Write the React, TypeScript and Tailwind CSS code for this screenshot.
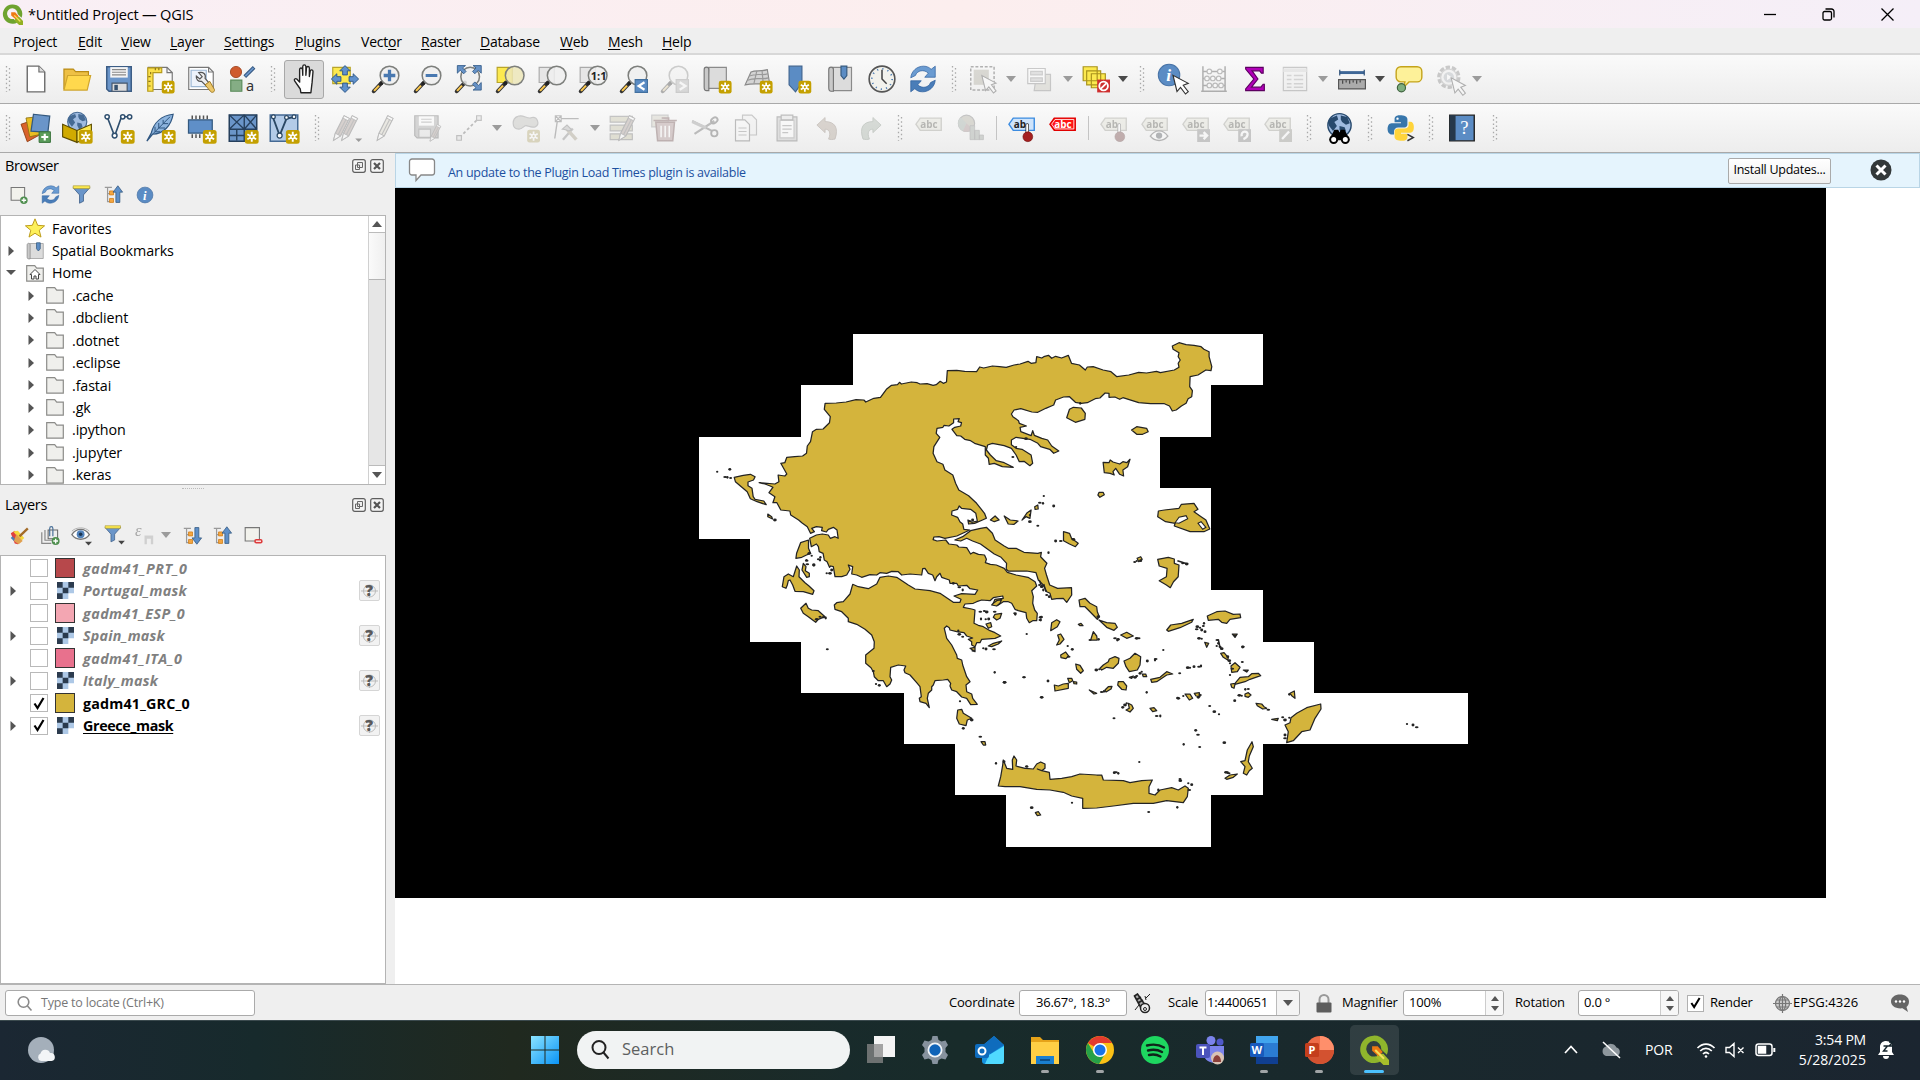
import React from "react";

type Kids = { children?: React.ReactNode };
const S = ({ children, s = 28, dim = false }: Kids & { s?: number; dim?: boolean }) => (
  <svg width={s} height={s} viewBox="0 0 24 24" fill="none" className={dim ? "shrink-0 overflow-visible opacity-35 grayscale-[60%]" : "shrink-0 overflow-visible"}>
    {children}
  </svg>
);
const C = ({ children, w = "w-[41.3px]" }: Kids & { w?: string }) => (
  <div className={"flex h-full shrink-0 items-center justify-center " + w}>{children}</div>
);
const Grip = ({ w = "w-5" }: { w?: string }) => (
  <C w={w}>
    <svg width="6" height="26" viewBox="0 0 6 26">
      <path d="M1.5 0v26M4.5 2v24" stroke="#a9a9a9" strokeWidth="1.3" strokeDasharray="1.5 2.7" />
    </svg>
  </C>
);
const Arr = ({ w = "w-[16px]", on = false }: { w?: string; on?: boolean }) => (
  <C w={w}>
    <svg width="10" height="6" viewBox="0 0 10 6"><path d="M0 0h10L5 6z" fill={on ? "#4a4a4a" : "#9b9b9b"} /></svg>
  </C>
);
const Sep = () => <C w="w-[10px]"><div className="h-6 w-px bg-[#c4c4c4]" /></C>;

const Star = ({ x = 13.5, y = 13.5 }: { x?: number; y?: number }) => (
  <g transform={`translate(${x} ${y})`}>
    <rect width="11" height="11" rx="2" fill="#c4a000" />
    <path d="M5.500 1.500v8M2 3.500l7 4M9 3.500l-7 4" stroke="#fff" strokeWidth="1.500" />
    <circle cx="5.500" cy="5.500" r="2" fill="#fff" />
    <circle cx="5.500" cy="5.500" r=".9" fill="#c4a000" />
  </g>
);
const Handle = () => (
  <>
    <path d="M1.500 22.500l7-7.500" stroke="#333" strokeWidth="3.400" strokeLinecap="round" />
    <path d="M1.800 22.200L6 17.700" stroke="#fcc94f" strokeWidth="1.800" />
    <circle cx="8" cy="15.700" r="1.600" fill="#222" />
  </>
);
const Lens = ({ x = 15, y = 9, fill = "#eee" }: { x?: number; y?: number; fill?: string }) => (
  <>
    <Handle />
    <circle cx={x} cy={y} r="8" fill={fill} fillOpacity=".85" stroke="#7d7f7c" strokeWidth="1.300" />
  </>
);
const Refresh = () => (
  <g stroke="#2d5f9e" strokeWidth=".6">
    <path d="M1.500 11C2 5 7 1 12.500 1c3 0 5 1.200 6.500 2.700L22.500 1v9.500h-9L16.500 7C13 3.500 7 4.500 5.500 9z" fill="#6a9bd1" />
    <path d="M22.500 13c-.5 6-5.500 10-11 10-3 0-5-1.200-6.500-2.700L1.500 23v-9.500h9L7.500 17c3.500 3.500 9.500 2.500 11-2z" fill="#4a7db8" />
  </g>
);
const Label = ({ fill = "#dedebd", stroke = "#93937a", color = "#45452f", t = "abc" }: { fill?: string; stroke?: string; color?: string; t?: string }) => (
  <>
    <path d="M4.500 3.500H22.500v10.500H4.500L.8 8.700z" fill={fill} stroke={stroke} strokeWidth="1.200" />
    <text x={t === "ab" ? 5 : 4.500} y="11.800" fontSize="8.500" fontWeight="700" fontFamily="Open Sans" fill={color}>{t}</text>
  </>
);
const Pin = () => (
  <>
    <path d="M16.500 9.500v8" stroke="#222" strokeWidth="3" strokeLinecap="round" />
    <path d="M16.500 9.500v7" stroke="#fff" strokeWidth="1.800" strokeLinecap="round" />
    <circle cx="17" cy="19.500" r="4.200" fill="#a52020" stroke="#701010" strokeWidth=".5" />
  </>
);
const Pencil = ({ x = 0, fill = "#dcd2a8" }: { x?: number; fill?: string }) => (
  <g transform={`translate(${x} 0)`}>
    <path d="M4.500 22.500l1.500-6L13.500 1.500l4.500 2.300-7.500 15z" fill={fill} stroke="#555" />
    <path d="M6 16.500l4.500 2.300-6 3.700zM13.500 1.500l4.500 2.300-1 2-4.500-2.300z" fill="#fff" stroke="#555" strokeWidth=".8" />
    <path d="M15 5L8.500 17.500" stroke="#666" />
  </g>
);
const Cursor = ({ x = 11, y = 9 }: { x?: number; y?: number }) => (
  <path transform={`translate(${x} ${y})`} d="M0 0l3.200 13 2.800-3.300 4 5.300 2.200-1.800-4-5.200 4-1.500z" fill="#fff" stroke="#333" strokeWidth=".9" />
);
const Globe = ({ c = "#456a94" }: { c?: string }) => (
  <>
    <circle cx="12" cy="9.500" r="9" fill="#9fbbe0" stroke={c} strokeWidth="1.100" />
    <path d="M5 4l5-2 1 3-3 2 2 3-3 4-3-4-1-3zM13 2l5 1 2 5-3 1-3-2-1-2zM12 10l4 1 1 3-3 3-2-4z" fill={c} />
  </>
);
const Paper = () => <path d="M4.500 1h10l5 5v17h-15z" fill="#fff" stroke="#6b6b6b" strokeWidth="1.200" />;
const QGIS = ({ s = 22 }: { s?: number }) => (
  <svg width={s} height={s} viewBox="0 0 24 24" className="shrink-0">
    <path fillRule="evenodd" d="M11.500.5a11 11 0 1 0 6 20.500L13.500 17a6 6.200 0 1 1 4.300-5.500l4.500 4.300A11 11 0 0 0 11.500.5z" fill="#6fa32f" />
    <path d="M16 14.500h3.500l4.500 5v4.500h-4.500L14.500 19z" fill="#93b023" />
    <path d="M10.500 9.500h4.500l4 4.500-3.500 3.500-5-4.500z" fill="#ee7913" />
    <path d="M14 13l7 7" stroke="#f3e05a" strokeWidth="1.500" />
  </svg>
);
const Filter = () => (
  <>
    <path d="M1.500 3.500l8 9V23l5-2.500v-8l8-9z" fill="#6a95c9" stroke="#3b5d86" />
    <path d="M1.500 1h21v3.500h-21z" fill="#fce94f" stroke="#a49435" strokeWidth=".8" />
  </>
);
const TreeIcon = ({ down = false }: { down?: boolean }) => (
  <>
    <path d="M1 3h9M4.500 3v18h4M4.500 11h4" stroke="#999" strokeWidth="1.500" />
    <path d="M7 7.500h5v5H7zM7 17h5v5H7z" fill="#f5a742" stroke="#d17e17" />
    <path transform={down ? "translate(0 24) scale(1 -1)" : ""} d="M17.500 1l6 8h-3.500v13h-5V9h-3.500z" fill="#5d8fc9" stroke="#34597f" />
  </>
);
const Info = () => (
  <>
    <circle cx="12" cy="12" r="10.500" fill="#5b8cc4" stroke="#4873a6" />
    <text x="9.200" y="18" fontSize="17" fontStyle="italic" fontWeight="700" fontFamily="Liberation Serif" fill="#fff">i</text>
  </>
);
const Dockbtns = () => (
  <div className="flex gap-1">
    <svg width="14" height="14" viewBox="0 0 14 14"><rect x=".7" y=".7" width="12.600" height="12.600" rx="2" fill="#f4f4f4" stroke="#5e5e5e" strokeWidth="1.200" /><path d="M5.500 3.500h5v5h-5zM3.500 6h4v4.500h-4z" fill="#eee" stroke="#666" /></svg>
    <svg width="14" height="14" viewBox="0 0 14 14"><rect x=".7" y=".7" width="12.600" height="12.600" rx="2" fill="#f4f4f4" stroke="#5e5e5e" strokeWidth="1.200" /><path d="M4 4l6 6M10 4l-6 6" stroke="#555" strokeWidth="2.200" /></svg>
  </div>
);

const menus: [string, number, string][] = [
  ["Project", 3, "w-[65px]"], ["Edit", 0, "w-[43px]"], ["View", 0, "w-[49px]"], ["Layer", 0, "w-[54px]"], ["Settings", 0, "w-[71px]"],
  ["Plugins", 0, "w-[66px]"], ["Vector", 4, "w-[60px]"], ["Raster", 0, "w-[59px]"], ["Database", 0, "w-[80px]"], ["Web", 0, "w-[48px]"],
  ["Mesh", 0, "w-[54px]"], ["Help", 0, "w-[60px]"],
];

function ToolbarOne() {
  return (
    <div className="flex h-[49px] border-b border-[#a9a9a9] bg-gradient-to-b from-[#fafafa] to-[#ededed]">
      <Grip w="w-[15.4px]" />
      <C><S><Paper /><path d="M14.500 1v5h5" stroke="#6b6b6b" fill="#ddd" /></S></C>
      <C><S><path d="M.8 21V3.500h8l2 2.200h11v4" fill="#eec045" stroke="#b98b16" /><path d="M.8 21.500L4 9h19.700l-3 12.500z" fill="#ffd84d" stroke="#cfa52c" /></S></C>
      <C><S><path d="M1.500 1.500h21v21h-19l-2-2z" fill="#6a95c9" stroke="#3c5d85" strokeWidth="1.300" /><path d="M4.500 1.800h15v9h-15z" fill="#f4f4f4" /><path d="M6 4h12M6 6.200h12M6 8.400h12" stroke="#888" /><path d="M6 15.500h13v7H6z" fill="#ddd" stroke="#44566b" /><path d="M8 17h3v4.500H8z" fill="#34506e" /></S></C>
      <C><S><path d="M2 2h16l4.500 4.500V21H2z" fill="#f8f8f8" stroke="#777" /><path d="M18 2v4.500h4.500" stroke="#777" /><path d="M1.500 2.500h12v4H6v16H1.500z" fill="#fbe04b" stroke="#b59a1b" /><path d="M4 6v2M8 2.500v2M11 2.500v2M2 10h2M2 14h2M2 18h2" stroke="#8a741a" /><Star /></S></C>
      <C><S><path d="M1.500 2h17l4 4v15h-21z" fill="#fff" stroke="#777" /><path d="M18.500 2v4h4" stroke="#777" /><path d="M3.500 4.500h13v14h-13z" fill="#edf3fb" stroke="#9db8d4" /><path d="M10 6.500c4-1 6.500 1.500 5.500 5l3.500 4-2.500 2.500-4-4c-3 .5-5-2-4.500-4.500l3 2.500 2-2z" fill="#eee" stroke="#555" /><path d="M15.500 17l4-3 4 7c.5 2-2 3.500-3.500 1.500z" fill="#ecc76a" stroke="#9b741b" strokeWidth=".8" /></S></C>
      <C><S><circle cx="6" cy="6" r="4.800" fill="#cf5b2e" stroke="#9c3d17" strokeWidth=".7" /><path d="M13.500 10l8-8" stroke="#33567f" strokeWidth="3.200" /><path d="M14 9.500l7-7" stroke="#6a95c9" strokeWidth="1.500" /><path d="M1.500 13h9.500v9.500H1.500z" fill="#85ad85" stroke="#5a8b5a" /><text x="14.500" y="22" fontSize="12.500" fontFamily="Noto Sans" fill="#333">a</text></S></C>
      <Grip w="w-[20px]" />
      <C>
        <div className="flex h-[39px] w-[40px] items-center justify-center rounded-[3px] border border-[#a8a8a8] bg-[#dadada]">
          <S s={30}><path d="M8 23L7.500 20 3 13.500c-.8-1.200.6-2.300 1.700-1.500L7 14.500V4.500c0-1.700 2.100-1.700 2.300 0L9.500 9V2c.2-1.700 2.300-1.700 2.500 0v7l.5-6c.3-1.500 2.300-1.300 2.300.3V10l.7-4.500c.4-1.300 2.200-1 2.200.5L17 14.500 16 23z" transform="translate(1.500 0)" fill="#fff" stroke="#222" strokeWidth="1.100" strokeLinejoin="round" /></S>
        </div>
      </C>
      <C><S><path d="M1.500 2h15v14h-15z" fill="#fce94f" stroke="#b8a42a" /><g fill="#5f91cd" stroke="#2c5685" strokeWidth=".8"><path d="M12 .5l4.500 4.500H14v3.500h-4V5H7.500zM12 23.500l4.500-4.500H14v-3.500h-4V19H7.500zM.3 12L5 7.500V10h3.500v4H5v2.500zM23.700 12L19 7.500V10h-3.500v4H19v2.500z" /></g></S></C>
      <C><S><Lens /><path d="M15 4v10M10 9h10" stroke="#4878b0" strokeWidth="2.800" /></S></C>
      <C><S><Lens /><path d="M10 9h10" stroke="#4878b0" strokeWidth="2.600" /></S></C>
      <C><S><Lens x={13} y={10} /><path d="M2 .5h7l-2.500 2 3 3-2 2-3-3L2 7zM22.500.5h-7l2.500 2-3 3 2 2 3-3 2.500 2.500zM22.500 21.500h-7l2.500-2-3-3 2-2 3 3 2.500-2.500z" fill="#6792c6" stroke="#2c5685" strokeWidth=".7" /></S></C>
      <C><S><path d="M1 2h13v13H1z" fill="#fce94f" stroke="#b8a42a" /><Lens x={16} fill="#ece6b8" /></S></C>
      <C><S><path d="M1 2h13v13H1z" fill="#e6e6e6" stroke="#aaa" /><Lens x={16} /></S></C>
      <C><S><path d="M1 2h13v13H1z" fill="#e6e6e6" stroke="#aaa" /><Lens x={16} /><text x="10" y="12.500" fontSize="9.500" fontWeight="700" fontFamily="Open Sans" fill="#222">1:1</text></S></C>
      <C><S><Lens /><path d="M13 12.500h10.500v11H13z" fill="#5b8cc4" stroke="#42709f" /><path d="M21 14.800l-5 3.200 5 3.200" stroke="#fff" strokeWidth="1.900" /></S></C>
      <C><S dim><Lens /><path d="M13 12.500h10.500v11H13z" fill="#aaa" stroke="#888" /><path d="M16 14.800l5 3.200-5 3.200" stroke="#fff" strokeWidth="1.900" /></S></C>
      <C><S><path d="M5 2h15v18H4z" fill="#dcdcdc" stroke="#8a8a8a" /><path d="M1 4c0-3 4-3 4 0v18H3C1 22 1 20 1 19z" fill="#c9c9c9" stroke="#777" /><Star /></S></C>
      <C><S><path d="M6 6c4-2 8 0 14-2l2 12c-7 1-13-1-21 1z" fill="#d4d4d4" stroke="#8a8a8a" /><path d="M11 5L8.500 16M15.500 5l1 11M4.500 9.500c7-3 11 0 16-2M3 13c7-3 12 0 18-2" stroke="#999" /><Star /></S></C>
      <C><S><path d="M3.500 1h11v14l-5.500 8-5.500-6z" fill="#5b8cc4" stroke="#41658f" /><Star x={11.500} /></S></C>
      <C><S><path d="M5 2h16v20H4z" fill="#dcdcdc" stroke="#8a8a8a" /><path d="M1.500 4c0-3 4-3 4 0v18.500H3.500c-2 0-2-2-2-3z" fill="#c9c9c9" stroke="#777" /><path d="M12 1h5v8l-2.500 3L12 9z" fill="#5b8cc4" stroke="#34597f" /></S></C>
      <C><S><circle cx="12" cy="12" r="11" fill="#f2f2ec" stroke="#555" strokeWidth="1.400" /><circle cx="12" cy="12" r="8.700" stroke="#4d7db4" strokeWidth="1.500" strokeDasharray="1 3.555" /><path d="M12 4v8l4 4" stroke="#444" strokeWidth="1.300" /></S></C>
      <C><S><Refresh /></S></C>
      <Grip w="w-[21px]" />
      <C w="w-[37px]"><S dim><path d="M1.500 1.500h20v20h-20z" stroke="#333" strokeDasharray="2.500 1.500" strokeWidth="1.300" /><path d="M4 4h13v13H4z" fill="#a8a27c" /><Cursor /></S></C>
      <Arr w="w-[18px]" />
      <C w="w-[40px]"><S dim><path d="M9 8h12v14H7z" fill="#c8c3a4" stroke="#777" /><path d="M1.500 3h15v13h-15z" fill="#fff" stroke="#777" /><path d="M4 5.500h10v3H4zM4 11h10v3H4z" fill="#bbb" stroke="#888" /></S></C>
      <Arr w="w-[17px]" />
      <C w="w-[38px]"><S><path d="M1 1.500h12v12H1zM4 5h12v12H4zM8 7.500h12v12H8z" fill="#fce94f" stroke="#a8921d" /><path d="M13 12.500h11v11H13z" fill="#cf2f2f" /><circle cx="18.500" cy="18" r="3.700" stroke="#fff" strokeWidth="1.600" /><path d="M16 20.500l5-5" stroke="#fff" strokeWidth="1.600" /></S></C>
      <Arr w="w-[17px]" on />
      <Grip w="w-[21px]" />
      <C w="w-[40px]"><S s={30}><g transform="translate(-1 -1) scale(.82)"><Info /></g><Cursor x={12} y={9} /></S></C>
      <C><S dim><path d="M2.500 1v22M21.500 1v22M1 22.500h22M2 5.500h20M2 11.500h20M2 17.500h20" stroke="#333" strokeWidth="1.300" /><g fill="#fff" stroke="#555"><circle cx="8" cy="5.500" r="2" /><circle cx="17" cy="5.500" r="2" /><circle cx="6" cy="11.500" r="2" /><circle cx="11" cy="11.500" r="2" /><circle cx="16" cy="11.500" r="2" /><circle cx="8" cy="17.500" r="2" /><circle cx="13" cy="17.500" r="2" /><circle cx="18" cy="17.500" r="2" /></g></S></C>
      <C><S><path d="M4 2h15v5h-1.500L16 5h-6.500l5 7-5.500 7h8l2-2.500h1V22H4v-1.500l7-8.500-7-8.500z" fill="#b100b8" stroke="#5c0060" strokeWidth="1" /></S></C>
      <C w="w-[38.500px]"><S dim><path d="M2 2h20v20H2z" fill="#eee" stroke="#777" /><path d="M2 3h20v3H2z" fill="#ccc" /><path d="M5 9h4M11 9h8M5 12.500h4M11 12.500h8M5 16h4M11 16h8M5 19h4M11 19h8" stroke="#999" strokeWidth="1.300" /></S></C>
      <Arr w="w-[18px]" />
      <C w="w-[40px]"><S><path d="M1.500 6.500h21" stroke="#3f6796" strokeWidth="2.500" /><path d="M1.500 4v5M22.500 4v5" stroke="#2d4f78" /><path d="M.5 12.500h23v8H.5z" fill="#ababab" stroke="#565656" /><path d="M4 13v3M7 13v2M10 13v3M13 13v2M16 13v3M19 13v2" stroke="#444" /></S></C>
      <Arr on />
      <C><S><path d="M5 1.500h14a4 4 0 0 1 4 4v5a4 4 0 0 1-4 4h-7L7.500 19l1-4.500H5a4 4 0 0 1-4-4v-5a4 4 0 0 1 4-4z" fill="#fdf199" stroke="#c4a31a" strokeWidth="1.200" /><circle cx="5.500" cy="19.500" r="3.500" fill="#7fae7f" stroke="#3e623e" /></S></C>
      <C w="w-[41px]"><S dim><circle cx="11" cy="10.500" r="8.500" fill="#eee" stroke="#777" strokeWidth="3" strokeDasharray="3.700 1.600" /><circle cx="11" cy="10.500" r="7" fill="#eee" stroke="#999" /><circle cx="11" cy="10.500" r="4.500" fill="#9aaabb" /><path d="M9.500 8l4 2.500-4 2.500z" fill="#fff" /><Cursor x={13} y={11} /></S></C>
      <Arr w="w-[14px]" />
    </div>
  );
}

function ToolbarTwo() {
  return (
    <div className="flex h-[49px] border-b border-[#a9a9a9] bg-gradient-to-b from-[#fafafa] to-[#ededed]">
      <Grip w="w-[15.4px]" />
      <C><S s={30}><path d="M0 9l9-3 5 12-9 5z" fill="#d9622b" stroke="#8e3b14" strokeWidth=".7" /><path d="M4 4l10-1 2 14-9 2z" fill="#e9bd22" stroke="#8e7314" strokeWidth=".7" /><path d="M10 1l13 1.500-1.500 13L8 14.500z" fill="#6a95c9" stroke="#34597f" /><path d="M14.500 15h9v8.500h-9z" fill="#5a9c5a" stroke="#37713a" strokeWidth=".8" /><path d="M19 16.500v5.500M16.200 19.200h5.600" stroke="#fff" strokeWidth="1.700" /></S></C>
      <C><S s={30}><g transform="translate(2 -1) scale(.85)"><Globe /></g><path d="M.5 9l11.500 5v9.500L.5 19z" fill="#d0aa00" stroke="#5c4c00" strokeWidth=".9" /><path d="M12 14l11.500-5v9.500L12 23.500z" fill="#fce94f" stroke="#5c4c00" strokeWidth=".9" /><Star /></S></C>
      <C><S s={30}><path d="M2.500 3l6 15.500L14 3h6.500" stroke="#2f4f6f" strokeWidth="1.300" /><g fill="#fff" stroke="#2f4f6f" strokeWidth="1.200"><circle cx="2.500" cy="3" r="1.700" /><circle cx="15" cy="3" r="1.700" /><circle cx="20.500" cy="3" r="1.700" /><circle cx="8.500" cy="18" r="1.900" /></g><Star /></S></C>
      <C><S s={30}><path d="M22.500 1C13 2 7 8 5 16l-3.500 6.500L6 17c9-.5 15-7 16.500-16z" fill="#8db4de" stroke="#2f5680" /><path d="M20 3L6 17M11 8v4h5M8 11v4h4M14.500 5.500v3h4" stroke="#2f5680" strokeWidth=".8" /><Star /></S></C>
      <C><S s={30}><path d="M2 5.500h19V16H2z" fill="#5f8fc8" stroke="#34597f" /><path d="M5 2v3M8 2v3M11 2v3M14 2v3M17 2v3M5 17v3M8 17v3M11 17v3" stroke="#555" strokeWidth="1.200" /><Star /></S></C>
      <C><S s={30}><path d="M1 1.500h22v21H1z" fill="#6a95c9" stroke="#253f5c" strokeWidth="1.200" /><path d="M1 13h22M13 1.500v21M1 1.500L13 13M13 1.500L1 13M13 13L23 1.500M13 1.500L23 13M1 18h12M7 13v9" stroke="#253f5c" strokeWidth="1.100" /><Star /></S></C>
      <C><S s={30}><path d="M1 1.500h22v21H1z" fill="#b3cbe8" stroke="#456a94" strokeWidth="1.200" /><path d="M3 3l5.500 15L14 4.500 21 3" stroke="#2b4865" strokeWidth="1.500" /><g fill="#fff" stroke="#2b4865"><circle cx="3.500" cy="3" r="1.500" /><circle cx="14" cy="3.500" r="1.500" /><circle cx="20" cy="3" r="1.500" /><circle cx="8.500" cy="18" r="2" /></g><Star /></S></C>
      <Grip w="w-[25px]" />
      <C w="w-[36px]"><S dim><Pencil x={-4} fill="#b58a7a" /><Pencil x={3} fill="#b58a7a" /><path d="M19 21h6l-3 3z" fill="#000" /></S></C>
      <C><S dim><Pencil /></S></C>
      <C><S dim><path d="M1.500 1.500h20v19h-18l-2-2z" fill="#999" stroke="#555" /><path d="M5 2h13v8H5z" fill="#fff" /><path d="M7 4.500h9M7 7h9" stroke="#888" /><path d="M5 13h10v7H5z" fill="#ddd" stroke="#666" /><g transform="translate(11.500 8) scale(.68)"><Pencil fill="#b58a7a" /></g></S></C>
      <C><S dim><path d="M4 20L20 4" stroke="#555" strokeWidth="1.500" strokeDasharray="2.500 2" /><path d="M1.500 18.500h4v4h-4zM18.500 1.500h4v4h-4z" fill="#ddd" stroke="#666" /></S></C>
      <Arr />
      <C><S dim><path d="M5 2c5-2 8 3 12 1 5-1 7 6 3 8-4 1-6-1-8-1-2 0-3 3-6 3C3 13 1 11 1 8s1-5 4-6z" fill="#b5b5a5" stroke="#777" /><Star x={13} y={13.500} /></S></C>
      <C><S dim><path d="M4 4L1.500 21M4 4h18" stroke="#555" strokeWidth="1.200" /><path d="M2 1.500h5v5H2zM2 1.500l5 5M7 1.500l-5 5" fill="#fff" stroke="#555" /><path d="M8.500 22L17 12.500" stroke="#777" strokeWidth="2" /><path d="M11.500 12.500L20 22" stroke="#a58f55" strokeWidth="3" /><path d="M8 13l4-3.500 4 4-2.500 1-2.500-1z" fill="#aaa" stroke="#666" /></S></C>
      <Arr w="w-[15px]" />
      <C w="w-[40.500px]"><S dim><path d="M1 2h19v5H1zM1 9.500h19v5H1zM1 17h19v5H1z" fill="#c8bd6d" stroke="#666" /><g transform="translate(4 0)"><Pencil fill="#b58a7a" /></g></S></C>
      <C w="w-[41px]"><S dim><path d="M1.500 1h14v10h-14z" fill="#d0c9a0" stroke="#888" /><path d="M5 7h16l-1.500 16h-13zM3 5.500h20M10 3.500h6v2" fill="#c47a7a" stroke="#8b3030" strokeWidth="1.300" /><path d="M9.500 10v10M13 10v10M16.500 10v10" stroke="#fff" strokeWidth="1.300" /></S></C>
      <C w="w-[41px]"><S dim><path d="M1 6l17 8.500M3 17L20 6" stroke="#555" strokeWidth="1.800" /><path d="M1 6.500L13 12" stroke="#888" strokeWidth="2.600" /><circle cx="20" cy="16.500" r="2.700" stroke="#444" strokeWidth="1.600" /><ellipse cx="20" cy="5.500" rx="3" ry="2.200" transform="rotate(-35 20 5.500)" stroke="#444" strokeWidth="1.600" /></S></C>
      <C w="w-[41px]"><S dim><path d="M9 1h8l4 4v13H9z" fill="#eee" stroke="#777" /><path d="M3 5h8l4 4v14H3z" fill="#f8f8f8" stroke="#555" /><path d="M5.500 12h7M5.500 15h7M5.500 18h7" stroke="#777" /></S></C>
      <C><S dim><path d="M3.500 2.500h17v20.500h-17z" fill="#bbb" stroke="#555" /><path d="M6 5.500h12v15H6z" fill="#fff" stroke="#888" /><path d="M7 1h10v4H7z" fill="#ddd" stroke="#555" /><path d="M8 10h8M8 13h8M8 16h5" stroke="#777" /></S></C>
      <C><S dim><path d="M2.500 9.500L9.500 3v3.500c8 0 12 5 8.500 15-2 .5-4 .5-5.500 0 2.500-6 0-8.500-3-8.500V16z" fill="#b9936c" stroke="#876244" strokeWidth=".7" /></S></C>
      <C><S dim><path d="M21.500 9.500L14.500 3v3.500c-8 0-12 5-8.500 15 2 .5 4 .5 5.500 0-2.500-6 0-8.500 3-8.500V16z" fill="#8fb08f" stroke="#5d7d5d" strokeWidth=".7" /></S></C>
      <Grip w="w-[18.500px]" />
      <C w="w-[41px]"><S dim><Label /></S></C>
      <C><S dim><circle cx="9" cy="8" r="7" fill="#a9a27a" stroke="#666" /><path d="M9 8L4 3a7 7 0 0 0 2 11.500z" fill="#7fa48f" /><path d="M9 8l-3 6.500A7 7 0 0 0 14 13z" fill="#bb7777" /><path d="M12 10h4v12h-4zM16 14h4v8h-4zM20 18h3.500v4H20z" fill="#8a9c8a" stroke="#666" strokeWidth=".6" /></S></C>
      <Sep />
      <C><S><Label fill="#cfe4fb" stroke="#3b8be0" color="#222" t="ab" /><Pin /></S></C>
      <C><S><Label fill="#ff1414" stroke="#e00000" color="#fff" /><path d="M5.200 4.700H21.300v8.100H5.200L2.300 8.700z" stroke="#fff" strokeWidth=".7" /></S></C>
      <Sep />
      <C w="w-[41px]"><S dim><Label t="ab" /><Pin /></S></C>
      <C w="w-[41px]"><S dim><Label /><path d="M8 19c4-6 11-6 15 0-4 5-11 5-15 0z" fill="#fff" stroke="#444" strokeWidth="1.200" /><circle cx="15.500" cy="18.500" r="2.700" fill="#345" /></S></C>
      <C w="w-[41px]"><S dim><Label /><path d="M13 13h11v11H13z" fill="#777" /><path d="M15 18.500h6M18.500 15.500l3 3-3 3" stroke="#fff" strokeWidth="2" /></S></C>
      <C w="w-[41px]"><S dim><Label /><path d="M13 13h11v11H13z" fill="#777" /><path d="M16 19c-1-5 6-5 5-1-.5 2-2 3-3.500 3.500" stroke="#fff" strokeWidth="2" /></S></C>
      <C w="w-[41px]"><S dim><Label /><path d="M13 13h11v11H13z" fill="#888876" /><path d="M15.500 21.500l6-6.500" stroke="#fff" strokeWidth="2" /></S></C>
      <Grip />
      <C><S s={31}><Globe c="#27496d" /><path d="M8 13h3l1 2 1-2h3l4 8H4z" fill="#000" /><circle cx="7.500" cy="20.500" r="2.700" fill="#fff" stroke="#000" strokeWidth="1.500" /><circle cx="16.500" cy="20.500" r="2.700" fill="#fff" stroke="#000" strokeWidth="1.500" /></S></C>
      <Grip />
      <C><S><path d="M11 1C7 1 6.500 3 6.500 4.500V7H12v1H4C1.500 8 .5 10.500.5 13S2 17.500 4 17.500h2V15c0-2 1.500-3.500 3.500-3.500h5.500c1.500 0 2.500-1 2.500-2.500V4.500C17.500 2 15 1 11 1z" fill="#3776ab" /><path d="M13 23c4 0 4.500-2 4.500-3.500V17H12v-1h8c2.500 0 3-2.500 3-5S22 6.700 20 6.700h-1.500V9.500c0 2-1.500 3-3.500 3H9.500C8 12.500 6.500 13.500 6.500 15v4.500C6.500 22 9 23 13 23z" fill="#ffd43b" /><circle cx="9" cy="4" r="1" fill="#fff" /><path d="M17.500 17.500l5 2.700-5 2.700" stroke="#333" strokeWidth="1.300" /></S></C>
      <Grip />
      <C><S><path d="M1.500 1h21v22h-21z" fill="#5b8cc4" stroke="#222" strokeWidth="1.200" /><path d="M1.500 1h5v22h-5z" fill="#26384a" /><text x="10.500" y="17.500" fontSize="16" fontFamily="Liberation Serif" fill="#fff">?</text></S></C>
      <Grip w="w-[25px]" />
    </div>
  );
}

const tree = [".cache", ".dbclient", ".dotnet", ".eclipse", ".fastai", ".gk", ".ipython", ".jupyter", ".keras"];
const Tri = ({ open = false, none = false }: { open?: boolean; none?: boolean }) => (
  <svg width="10" height="10" viewBox="0 0 10 10" className="shrink-0">{!none && <path d={open ? "M0 2h10L5 7z" : "M2.500 0v10L8 5z"} fill="#555" />}</svg>
);
const Folder = ({ home = false }: { home?: boolean }) => (
  <svg width="18" height="17" viewBox="0 0 18 17" className="shrink-0">
    <path d="M.7.700h8l2 2.500h6.600v13H.7z" fill="#efefec" stroke="#8c8c89" strokeWidth="1.200" />
    {home && <path d="M4 9.500l5-5 5 5h-1.500V14h-2.500v-3H8v3H5.500V9.500z" fill="#fff" stroke="#444" />}
  </svg>
);
const layers: [string, string | null, boolean, string][] = [
  ["gadm41_PRT_0", "bg-[#b7484b]", false, "tracking-[0.550px]"], ["Portugal_mask", null, false, "tracking-[0.300px]"],
  ["gadm41_ESP_0", "bg-[#f3a6b2]", false, "tracking-[0.450px]"], ["Spain_mask", null, false, "tracking-[0.250px]"],
  ["gadm41_ITA_0", "bg-[#e8718d]", false, "tracking-[0.450px]"], ["Italy_mask", null, false, "tracking-[0.250px]"],
  ["gadm41_GRC_0", "bg-[#d4b43c]", true, "tracking-[0.150px]"], ["Greece_mask", null, true, "tracking-[-0.350px]"],
];

function Sidebar() {
  return (
    <div className="flex w-[386px] shrink-0 flex-col">
      <div className="flex h-[26px] items-center justify-between pl-[5px] pr-[2px] text-[14.500px]"><span className="tracking-[-0.400px]">Browser</span><Dockbtns /></div>
      <div className="flex h-[36px] items-center gap-[12.700px] pb-[5px] pl-[10px]">
        <S s={18}><path d="M1.500 2h18v17h-18z" fill="#f2f2ec" stroke="#777" strokeWidth="1.400" /><circle cx="18.500" cy="19" r="5" fill="#4f8f4f" /><path d="M18.500 16v6M15.500 19h6" stroke="#fff" strokeWidth="1.700" /></S>
        <S s={19}><Refresh /></S>
        <S s={19}><Filter /></S>
        <S s={19}><TreeIcon /></S>
        <S s={18}><Info /></S>
      </div>
      <div className="flex h-[270px] overflow-hidden border border-[#b4b4b4] bg-white">
        <div className="flex min-w-0 grow flex-col pt-px text-[14.300px] tracking-[-0.120px]">
          <div className="flex h-[22.450px] shrink-0 items-center gap-[9px] pl-[5px]"><Tri none />
            <div className="flex items-center gap-[7px]"><svg width="20" height="20" viewBox="0 0 24 24"><path d="M12 1l3.200 7.800 8.300.6-6.400 5.300 2.100 8.200L12 18.300 4.800 22.900l2.100-8.200L.5 9.400l8.300-.6z" fill="#fdf05a" stroke="#bd9c1c" strokeWidth="1.200" /></svg>Favorites</div>
          </div>
          <div className="flex h-[22.450px] shrink-0 items-center gap-[10px] pl-[5px]"><Tri />
            <div className="flex items-center gap-[8px]"><S s={18}><path d="M5 2h18v20H4z" fill="#dcdcdc" stroke="#999" /><path d="M1.500 4c0-3 4-3 4 0v18.500H3.500c-2 0-2-2-2-3z" fill="#c9c9c9" stroke="#888" /><path d="M14 1h5v8l-2.500 3L14 9z" fill="#5b8cc4" stroke="#34597f" /></S>Spatial Bookmarks</div>
          </div>
          <div className="flex h-[22.450px] shrink-0 items-center gap-[10px] pl-[5px]"><Tri open /><div className="flex items-center gap-[8px]"><Folder home />Home</div></div>
          {tree.map((t) => (
            <div key={t} className="flex h-[22.450px] shrink-0 items-center gap-[10px] pl-[25px]"><Tri /><div className="flex items-center gap-[8px]"><Folder />{t}</div></div>
          ))}
        </div>
        <div className="flex w-[17px] shrink-0 flex-col border-l border-[#d0d0d0]">
          <div className="flex h-[17px] items-center justify-center border-b border-[#bbb]"><svg width="10" height="6"><path d="M0 6h10L5 0z" fill="#555" /></svg></div>
          <div className="h-[47px] border-b border-[#b4b4b4] bg-gradient-to-r from-[#fafafa] to-[#efefef]" />
          <div className="grow border-b border-[#bbb] bg-[#e6e6e6]" />
          <div className="flex h-[18px] items-center justify-center"><svg width="10" height="6"><path d="M0 0h10L5 6z" fill="#555" /></svg></div>
        </div>
      </div>
      <div className="flex h-[7px] items-center justify-center"><div className="w-[22px] border-t border-dotted border-[#bbb]" /></div>
      <div className="flex h-[26px] items-center justify-between pl-[5px] pr-[2px] text-[14.500px]"><span className="tracking-[-0.300px]">Layers</span><Dockbtns /></div>
      <div className="flex h-[37px] items-center gap-[11.500px] pb-[3px] pl-[10px]">
        <S s={19}><path d="M1 9l5-3 9 11-5 6-4-1z" fill="#e04040" /><path d="M4 7l6-1 8 9-4 4z" fill="#f5d83d" /><path d="M2 14l4 4" stroke="#4a7db8" strokeWidth="3" /><path d="M12 13L22.500 3" stroke="#a36b28" strokeWidth="3" /><path d="M8 10l8 9-5 4-6-4z" fill="#e0a050" /></S>
        <S s={19}><path d="M1 8v14h12M5 5v13h12" stroke="#888" strokeWidth="1.500" /><path d="M9 5h12v11H9z" fill="#eee" stroke="#666" strokeWidth="1.300" /><path d="M11 13V3c0-3 4-3 4 0v10" stroke="#4a7199" strokeWidth="1.500" /><circle cx="18.500" cy="19" r="5" fill="#4f8f4f" /><path d="M18.500 16v6M15.500 19h6" stroke="#fff" strokeWidth="1.700" /></S>
        <S s={21}><path d="M1 11c5-8 15-8 20 0-5 7-15 7-20 0z" fill="#fff" stroke="#777" strokeWidth="1.500" /><circle cx="11" cy="10.500" r="4.500" fill="#5283bb" /><circle cx="11" cy="10.500" r="2" fill="#1d3550" /><path d="M1 7c5-5 15-5 20 0" stroke="#aaa" /><path d="M16 19h8l-4 4.500z" fill="#444" /></S>
        <S s={20}><g transform="scale(.88)"><Filter /></g><path d="M17 19h8l-4 4.500z" fill="#444" /></S>
        <div className="flex items-center gap-[7px]"><S s={19} dim><text x="0" y="13" fontSize="21" fontFamily="Liberation Serif" fontStyle="italic" fill="#222">ε</text><path d="M12 12h11v11h-3v-7h-5v7h-3z" fill="#999" /></S><Arr w="w-[10px]" /></div>
        <S s={19}><TreeIcon down /></S>
        <S s={19}><TreeIcon /></S>
        <S s={19}><path d="M1.500 2h18v17h-18z" fill="#f2f2ec" stroke="#777" strokeWidth="1.400" /><rect x="13" y="16.500" width="10.500" height="5.500" rx="2.500" fill="#dd3c3c" /><path d="M15 19.200h6.500" stroke="#fff" strokeWidth="1.600" /></S>
      </div>
      <div className="flex grow flex-col border border-[#b4b4b4] bg-white pt-px">
        {layers.map(([n, sw, on, tr]) => (
          <div key={n} className="flex h-[22.500px] items-center pl-[7px] pr-[5px]">
            <Tri none={!!sw} />
            <div className="ml-[12px] flex h-[18px] w-[18px] items-center justify-center border border-[#b9b9b9] bg-white">
              {on && <svg width="12" height="13" viewBox="0 0 12 13"><path d="M1.500 6.500l3 4.500L10.500 1" fill="none" stroke="#000" strokeWidth="2.200" /></svg>}
            </div>
            <div className="ml-[7px] flex w-5 justify-center">
              {sw ? <div className={"h-5 w-5 border border-[#333] " + sw} /> : (
                <svg width="17" height="17" viewBox="0 0 3 3"><path d="M0 0h3v2H2v1H0z" fill="#adc8e6" /><path d="M0 0h1v1H0zM2 0h1v1H2zM1 1h1v1H1zM0 2h1v1H0z" fill="#2b3b4e" /></svg>
              )}
            </div>
            <span className={"ml-[8px] grow text-[14.300px] font-bold " + tr + " " + (on ? (sw ? "text-black" : "text-black underline underline-offset-2") : "italic text-[#808080]")}>{n}</span>
            {!sw && (
              <div className="flex h-[21px] w-[21px] items-center justify-center rounded-[2px] border border-[#d5d5d5] bg-[#f2f2f2]">
                <svg width="19" height="19" viewBox="0 0 19 19" fill="none" className="overflow-visible"><circle cx="9.500" cy="10" r="6" stroke="#bbb" /><path d="M1 10h17M9.500 4v13" stroke="#bbb" /><text x="5.200" y="15" fontSize="15.500" fontWeight="800" fontFamily="Open Sans" fill="#5a5a5a">?</text></svg>
              </div>
            )}
          </div>
        ))}
      </div>
    </div>
  );
}

/* Outline points are kept in local grids: the northern one is stretched horizontally, the other two are uniform. */
const plot = (s: string, ox: number, oy: number, kx: number) =>
  s.trim().split(/\s+/).map((p) => {
    const [x, y] = p.split(",").map(Number);
    return `${(ox + x * kx).toFixed(1)},${(oy + y / 3).toFixed(1)}`;
  }).join(" ");
const N = (s: string) => plot(s, 680, 320, 620 / 1568);
const P = (s: string) => plot(s, 680, 560, 1 / 3);
const E = (s: string) => plot(s, 1000, 560, 1 / 3);

const mainland = [
  N("367,250 395,249 420,246 445,239 465,240 470,246 490,235 507,232 522,208 535,196 550,194 555,187 560,192 585,186 600,188 607,192 625,191 640,196 648,194 658,184 666,190 674,186 676,152 700,151 720,154 750,155 758,141 768,144 790,138 808,140 825,142 845,135 860,132 880,124 888,130 900,128 902,110 915,114 920,110 932,106 940,115 950,109 965,114 982,106 990,130 1010,135 1025,150 1030,141 1045,140 1070,150 1090,155 1105,170 1135,165 1160,157 1180,159 1205,154 1215,158 1250,150 1262,142 1260,130 1265,120 1260,110 1262,98 1247,88 1245,78 1262,68 1280,74 1300,76 1318,80 1325,88 1338,95 1338,110 1345,140 1343,152 1330,150 1310,165 1290,170 1289,200 1296,212 1294,230 1285,236 1280,250 1268,258 1255,270 1245,273 1238,258 1225,251 1190,251 1160,248 1120,233 1112,238 1100,231 1085,232 1085,220 1075,219 1062,234 1050,236 1030,248 1015,250 1000,247 985,230 970,231 950,240 945,255 925,265 905,277 890,276 862,266 845,270 838,282 842,290 856,302 858,310 876,318 860,322 862,335 888,347 892,332 896,346 915,355 930,360 940,378 958,393 945,400 935,388 912,380 905,370 885,358 850,352 838,360 838,374 850,385 865,388 888,405 892,430 885,437 870,424 858,425 850,405 838,385 820,377 790,370 778,375 775,390 785,405 800,422 820,428 843,442 815,440 795,430 782,433 780,415 772,405 772,380 745,370 735,362 720,358 710,348 700,347 688,328 695,322 710,318 712,308 703,305 706,296 692,297 692,308 680,318 668,316 665,322 650,325 648,340 657,352 642,380 640,400 650,425 665,433 670,450 690,465 697,490 705,510 730,527 750,550 770,580 775,595 765,600 745,610 730,612 728,600 738,607 752,603 748,580 735,568 712,565 706,558 702,568 688,573 687,585 702,592 708,605 715,612 718,628 733,630 715,640 700,648 670,655 655,650 642,651 640,659 650,663 672,660 680,672 700,675 705,681 725,683 735,702 742,697 755,703 770,705 775,718 772,728 785,733 800,735 820,745 828,757 850,765 880,772 898,785"),
  P("1070,78 1055,92 1060,110 1058,130 1064,150 1072,160 1070,182 1058,182 1048,188 1040,175 1038,158 1015,152 1005,148 995,130 985,125 970,125 955,135 940,130 945,118 970,115 968,108 940,113 930,122 905,120 890,125 880,130 855,132 850,142 875,147 885,150 882,190 895,196 910,200 930,212 945,218 962,228 945,235 905,238 900,248 890,248 885,260 875,255 875,245 865,238 878,234 860,228 852,218 830,215 810,210 808,203 800,198 793,205 800,235 815,255 830,285 832,295 845,300 848,315 855,335 860,350 870,365 858,375 860,395 875,402 878,415 892,433 872,434 860,415 845,411 830,395 815,390 810,378 812,370 803,358 790,360 765,362 760,375 755,380 755,390 745,400 742,415 748,443 738,430 720,425 718,415 724,410 720,380 710,368 690,345 675,338 672,330 677,318 655,315 632,322 630,350 635,360 630,372 620,380 610,362 595,362 583,350 580,335 573,323 557,310 557,285 582,265 583,245 575,225 555,208 530,193 505,185 505,175 485,155 465,148 463,135 470,128 490,125 510,102 518,73 535,80 565,86 590,72 600,52 625,48 650,52 685,75 705,87 750,92 780,100 820,127 840,127 843,118 822,108 845,101 885,103 893,90 870,86 860,76 835,78 830,70 810,70 808,60 785,52 780,40 770,50 765,62 758,45 745,40 735,25 728,26 725,45 690,42 665,45 655,35 635,34 620,40 600,38 590,45 570,44 545,52 530,45 515,42 518,20 505,15 510,28 500,45 485,50 465,50 460,20 452,18"),
  N("378,742 372,725 365,720 362,700 352,695 350,680 345,672 332,680 328,655 345,645 360,642 375,645 380,655 392,650 400,655 397,630 388,622 375,628 370,636 358,632 360,622 345,620 333,625 340,635 330,640 322,620 308,608 300,600 280,585 278,573 255,570 245,548 235,548 240,530 225,518 235,502 228,498 215,492 200,488 240,492 250,485 248,465 265,468 270,462 255,430 265,428 270,412 290,410 310,408 320,400 322,378 330,365 335,335 345,328 362,327 378,308 380,290 365,268"),
].join(" ");

const evia = [
  N("735,632 760,625 775,622 790,640 797,660 820,678 830,685 850,685 870,697 905,700 914,697 912,710 928,730 922,745 927,765 935,795 955,805 990,803"),
  P("1175,105 1160,127 1150,115 1130,116 1115,118 1110,100 1100,95 1090,75 1075,60 1068,38 1040,33 985,33"),
  N("825,748 826,730 812,712 795,702 760,672 740,663 725,655 710,663 695,660 715,650"),
].join(" ");

const isles: string[] = [
  evia,
  N("325,660 305,668 295,700 293,715 308,712 320,705 330,700 325,685"),
  P("350,18 358,30 357,50 375,68 387,78 402,92 398,103 370,95 345,94 338,75 330,60 325,62 322,75 318,85 307,80 312,50 325,42 340,50"),
  P("370,10 378,20 376,32 388,40 388,50 380,52 366,30"), P("378,130 385,145 395,150 415,152 435,170 415,178 407,187 385,170 370,160 362,145"),
  N("137,472 160,466 178,463 190,470 186,480 172,486 172,497 182,505 185,530 190,538 212,543 218,554 195,545 178,536 170,515 155,500 140,485"),
  N("222,582 232,590 234,597 222,590"), N("985,268 995,262 1015,264 1025,280 1024,298 1000,307 978,293"), N("1142,330 1155,320 1180,325 1184,335 1170,343 1155,343"),
  N("1070,427 1085,428 1088,420 1095,426 1112,432 1120,425 1130,428 1138,418 1132,440 1120,450 1122,468 1112,463 1102,445 1095,455 1098,465 1088,460 1073,458"),
  N("1060,517 1070,517 1073,524 1062,532 1057,525"),
  N("1210,573 1225,570 1262,565 1268,553 1300,550 1310,568 1300,575 1318,590 1330,600 1340,627 1325,635 1290,635 1250,618 1252,610 1228,605 1208,590"),
  N("1208,718 1235,712 1250,717 1250,730 1262,735 1260,770 1248,785 1240,803 1230,795 1212,782 1230,770 1232,745 1212,738"),
  N("1156,715 1165,710 1169,718 1160,725"), N("970,635 985,640 990,655 1007,670 1000,680 985,672 970,662"), N("785,600 797,588 807,600 795,605"), N("820,588 835,600 855,603 845,613 830,612"), N("865,600 878,578 888,570 885,595 875,590"), N("897,560 905,555 906,567 898,568"),
  P("940,130 950,122 965,118 960,130 950,138 935,135"), P("945,163 965,160 960,175 950,180 940,172"), P("918,192 932,188 935,200 925,205"), P("925,258 940,250 965,243 955,252 935,260"), P("870,265 885,262 885,275"),
  P("833,450 845,448 850,460 875,475 862,480 858,497 838,492 830,475"), P("903,545 915,545 917,555 910,555"),
  E("10,600 20,625 38,628 37,600 42,588 50,600 48,618 75,625 100,627 110,612 122,606 135,612 135,625 125,632 112,627 125,632 148,637 150,658 185,655 215,650 240,642 290,645 305,645 310,660 370,662 390,668 425,662 457,660 447,680 447,700 465,705 480,690 515,683 535,690 555,678 565,685 562,710 550,728 500,722 460,730 400,730 340,738 290,744 248,745 248,715 215,708 190,697 150,690 110,688 60,680 15,680 -5,678 2,650 8,615"),
  E("106,758 115,755 122,765 112,767"),
  E("237,120 255,115 270,130 290,140 292,155 298,170 292,178 270,155 255,140 240,140"), E("297,180 320,188 345,190 352,202 342,211 320,202"), E("362,225 380,217 400,228 380,235"),
  E("155,188 170,179 180,185 172,200 152,212"), E("173,225 182,222 192,238 180,252 170,255 178,240"), E("182,285 197,276 206,288 197,296 183,293"), E("227,312 240,316 250,332 242,340 230,328"), E("235,193 243,190 249,197 240,197"), E("275,230 280,215 290,228 292,240 272,240"),
  E("300,325 310,315 325,305 328,297 345,290 357,295 355,310 340,325 320,322 305,330"), E("372,303 390,295 405,280 422,290 420,315 412,330 388,335 378,320"),
  E("163,375 175,378 190,372 205,370 205,385 165,393"), E("203,355 215,355 218,362 208,368"), E("220,365 230,366 230,372 222,371"), E("315,390 325,380 336,379 333,387 318,396"), E("355,365 370,365 380,378 378,390 365,388 353,375"), E("268,390 290,400 282,402"),
  E("452,358 480,352 500,335 518,342 500,345 470,365 455,367"), E("555,402 570,402 578,415 568,420"), E("583,400 598,398 600,410 588,408"), E("450,445 462,443 470,452 458,455"), E("385,430 395,435 400,445 390,456 378,450 388,445"), E("427,342 437,342 440,350 430,350"), E("388,352 400,348 395,355"),
  E("500,210 512,195 545,190 580,178 575,187 540,203 505,214"), E("622,168 650,155 675,153 700,163 720,162 722,173 690,178 680,190 665,187 655,178 625,181"), E("614,247 626,250 620,262"), E("662,280 672,278 685,293 683,300 670,292"), E("693,318 705,308 720,322 712,335 695,337"), E("730,330 745,330 740,336"),
  E("692,372 705,370 720,352 745,350 755,341 775,340 782,347 750,358 735,365 705,373 702,385 695,382"), E("735,402 745,398 753,405 745,412 735,409"), E("768,430 785,432 792,440 800,445 788,447 772,437"), E("870,400 883,393 885,415 875,407"), E("697,222 712,222 705,232"),
  E("855,495 870,488 873,473 890,460 920,443 962,432 963,447 945,475 930,510 905,515 880,542 860,548 865,515"), E("815,478 835,475 832,482"), E("756,545 760,560 748,588 745,605 757,625 748,632 740,645 730,640 735,620 722,605 735,602 742,570"), E("675,655 690,645 712,642 700,652 680,658"),
];
const dots = [
  N("94,455 126,448 114,471 120,472 128,474 240,600 920,528 945,558 910,548 918,550 905,617 885,605 885,585 950,663 963,663 932,698 1150,726 995,658 320,720 338,735 322,733 1012,250 842,411 875,356 850,381 740,600 733,604 355,712 350,718 327,700 333,707"),
  P("402,15 380,2 420,0 442,268 450,40 440,40 455,30 430,172 437,174 420,170 410,178 588,372 598,376 901,155 903,177 913,153 920,156 917,178 926,177 944,155 835,213 848,230 838,223 910,265 918,267 942,268 1006,163 1080,180 1082,172 1040,222 973,367 1032,352 944,337 1104,363 1085,412 840,424 850,505 901,530 948,610 1040,619 1055,743 1176,728 1108,110 880,272 1090,90 1100,105 1085,80 1078,75 820,70 838,82 848,90 580,333 875,480"),
  E("203,258 217,268 206,290 144,363 72,352 14,367 125,412 355,238 345,235 352,240 417,235 410,235 490,270 442,303 467,297 465,300 539,340 563,323 570,323 582,320 597,320 603,318 410,348 405,352 425,335 420,340 305,396 312,394 533,413 535,415 550,408 595,412 600,405 440,397 342,475 375,435 380,430 368,442 470,468 481,468 629,438 643,455 657,463 587,511 594,524 551,553 599,561 673,548 418,606 343,638 348,637 355,640 540,657 541,662 565,670 575,674 568,690 532,742 446,756 592,200 600,203 605,210 590,208 612,190 610,198 597,235 605,236 615,215 652,240 655,250 660,260 665,266 650,258 728,261 729,260 705,228 727,306 688,302 690,310 683,290 697,326 736,388 745,387 718,406 725,407 704,422 805,449 868,403 848,472 855,480 868,473 855,525 855,535 683,638 687,640 678,637 1221,492 1239,495 1250,502 296,238 270,240 289,330 298,328 12,605 80,620 475,690 548,10 560,12 410,3 422,2 45,160 122,180 124,170 295,170 690,345"),
].join(" ").split(" ").map((p) => p.split(",").map(Number));

const Map = () => (
  <svg width="1431" height="710" viewBox="395 188 1431 710" className="block">
    <path d="M395 188h1431v710H395z" fill="#000" />
    <path d="M853 334H1263V385H1211V437H1160V488H1211V590H1263V642H1314V693H1468V744H1263V795H1211V847H1006V795H955V744H904V693H801V642H750V539H699V437H801V385H853z" fill="#fff" />
    <g fill="#d4b43c" stroke="#232323" strokeWidth="1.250" strokeLinejoin="round">
      <polygon points={mainland} />
      {isles.map((p, i) => <polygon key={i} points={p} />)}
    </g>
    <g fill="#fff" stroke="#232323" strokeWidth="1.100">
      <polygon points={N("1252,608 1262,592 1280,587 1284,596 1262,610")} />
      <polygon points={N("1310,610 1318,605 1330,622 1322,628")} />
    </g>
    <g stroke="#232323" strokeWidth="1.500">
      <polyline fill="none" points={N("1258,722 1270,727 1285,733")} />
      <polyline fill="none" points={E("655,238 660,262 668,268")} />
      <polyline fill="none" points={E("118,60 125,80 132,75 138,95")} />
    </g>
    {dots.map(([x, y], i) => <ellipse key={i} cx={x} cy={y} rx={1.15 + (i % 3) * 0.35} ry={1.05 + (i % 2) * 0.35} fill="#232323" />)}
  </svg>
);

const Spin = () => (
  <div className="flex h-full w-[18px] flex-col items-center justify-center gap-[5px] border-l border-[#ccc] bg-[#f7f7f7]">
    <svg width="8" height="5"><path d="M0 5h8L4 0z" fill="#555" /></svg><svg width="8" height="5"><path d="M0 0h8L4 5z" fill="#555" /></svg>
  </div>
);
const Box = ({ children, w }: Kids & { w: string }) => (
  <div className={"flex h-[26px] shrink-0 items-center overflow-hidden rounded-[3px] border border-[#aaa] bg-white " + w}>{children}</div>
);

function Status() {
  return (
    <div className="flex h-[35px] shrink-0 items-center bg-[#efefef] pl-[5px] pt-px text-[13px] tracking-[-0.200px]">
      <Box w="w-[250px]"><svg width="17" height="17" viewBox="0 0 17 17" className="ml-[10px] mr-2 shrink-0" fill="none" stroke="#8a8a8a" strokeWidth="1.600"><circle cx="7.500" cy="7" r="5.300" /><path d="M11.500 11l4 4.500" /></svg><span className="text-[12.500px] text-[#777]">Type to locate (Ctrl+K)</span></Box>
      <div className="ml-[694px] w-[70px]">Coordinate</div>
      <Box w="w-[108px] justify-center">36.67°, 18.3°</Box>
      <svg width="19" height="21" viewBox="0 0 19 21" className="ml-[6px]" fill="none"><path d="M1.500 3l3-2 7 10-4 3zM3 7l5-3M5 10l5-3" stroke="#222" strokeWidth="1.600" fill="#aaa" /><path d="M13 5l4-4M2 17l4-5M12 3l1 4" stroke="#222" /><circle cx="12" cy="15" r="4.500" fill="#eee" stroke="#222" strokeWidth="1.500" /><circle cx="12" cy="16" r="1.500" stroke="#222" /></svg>
      <div className="ml-[16px] w-[37px]">Scale</div>
      <Box w="w-[95px]"><span className="w-[70px] shrink-0 whitespace-nowrap pl-px tracking-[-0.200px]">1:4400651</span><div className="flex h-full grow items-center justify-center border-l border-[#bbb] bg-[#f4f4f4]"><svg width="10" height="6"><path d="M0 0h10L5 6z" fill="#555" /></svg></div></Box>
      <svg width="16" height="19" viewBox="0 0 16 19" className="ml-[16px]"><path d="M3.500 9V5.500a4.500 4.500 0 0 1 9 0V9" fill="none" stroke="#999" strokeWidth="2" /><rect x=".5" y="8.500" width="15" height="10" rx="1" fill="#5d5d5d" /></svg>
      <div className="ml-[10px] w-[61px]">Magnifier</div>
      <Box w="w-[101px]"><span className="grow pl-[5px]">100%</span><Spin /></Box>
      <div className="ml-[11px] w-[63px]">Rotation</div>
      <Box w="w-[101px]"><span className="grow pl-[5px]">0.0 °</span><Spin /></Box>
      <div className="ml-[8px] flex h-[17px] w-[17px] items-center justify-center border border-[#b0b0b0] bg-white"><svg width="11" height="12" viewBox="0 0 12 13"><path d="M1.500 6.500l3 4.500L10.500 1" fill="none" stroke="#000" strokeWidth="2.200" /></svg></div>
      <div className="ml-[6px] w-[63px]">Render</div>
      <svg width="19" height="19" viewBox="0 0 19 19" fill="none" stroke="#777" strokeWidth="1.200"><circle cx="9.500" cy="9.500" r="7" fill="#ccc" /><ellipse cx="9.500" cy="9.500" rx="3.200" ry="7" /><path d="M0 9.500h19M9.500 0v19M3.500 6h12M3.500 13h12" /></svg>
      <div className="ml-px w-[97px] tracking-[0.050px]">EPSG:4326</div>
      <svg width="20" height="20" viewBox="0 0 20 20"><path d="M10 1.500c5 0 9 2.700 9 7 0 2.700-1 4.300-2.500 5.500L18 19l-5.500-3.700C5 16 1 12.500 1 8.500c0-4.300 4-7 9-7z" fill="#666" /><circle cx="6" cy="8.500" r="1.200" fill="#fff" /><circle cx="10" cy="8.500" r="1.200" fill="#fff" /><circle cx="14" cy="8.500" r="1.200" fill="#fff" /></svg>
    </div>
  );
}

const AppIcon = ({ children, run = 0 }: Kids & { run?: number }) => (
  <div className={"flex h-[50px] w-[49px] shrink-0 flex-col items-center rounded-[5px] pt-[10px] " + (run === 2 ? "bg-white/10" : "")}>
    <svg width="30" height="30" viewBox="0 0 30 30">{children}</svg>
    {run === 1 && <div className="mt-[5px] h-[3px] w-2 rounded bg-[#a0a4a6]" />}
    {run === 2 && <div className="mt-[5px] h-[3px] w-5 rounded bg-[#4cc2ff]" />}
  </div>
);

function Taskbar() {
  return (
    <div className="flex h-[61px] shrink-0 items-center border-t border-[#3b4a4e] bg-gradient-to-r from-[#1a2731] via-[#182b2a] to-[#1b2530] pb-[3px] text-white">
      <div className="-mb-[3px] flex h-[60px] w-[513px] items-center bg-gradient-to-r from-[#1b2733] via-[#172a2c] to-[#20291f] pb-[3px] pl-[26px]">
        <svg width="32" height="32" viewBox="0 0 32 32"><circle cx="15" cy="16" r="13" fill="#a4afba" /><path d="M15 27a4 4 0 0 1-.5-7.500 5 5 0 0 1 9.500-.5 4 4 0 0 1 1.500 8z" fill="#f3f5f7" /></svg>
      </div>
      <div className="-mb-[3px] flex h-[60px] items-center bg-gradient-to-r from-[#20291f] to-[#192b2b] pb-[3px]">
        <div className="flex w-[63px] items-center justify-center">
          <svg width="30" height="30" viewBox="0 0 30 30"><defs><linearGradient id="w" x2="1" y2="1"><stop stopColor="#8be4ff" /><stop offset="1" stopColor="#0a93f5" /></linearGradient></defs><path d="M1 1h13.500v13.500H1zM15.500 1H29v13.500H15.500zM1 15.500h13.500V29H1zM15.500 15.500H29V29H15.500z" fill="url(#w)" /></svg>
        </div>
        <div className="ml-px flex h-[38px] w-[273px] items-center rounded-full bg-[#f1f3f3] pl-[13px]">
          <svg width="21" height="21" viewBox="0 0 21 21" fill="none" stroke="#222" strokeWidth="2"><circle cx="9" cy="8.500" r="6.500" /><path d="M13.500 13.500l5 6" /></svg>
          <span className="ml-[11px] text-[16.500px] text-[#5d5f60]">Search</span>
        </div>
      </div>
      <div className="flex items-center gap-[5.850px] pl-[6px]">
        <AppIcon><path d="M8 1h21v21H8z" fill="#f4f4f4" /><path d="M1 9h16v19H1z" fill="#8a8a8a" fillOpacity=".75" /></AppIcon>
        <AppIcon><path d="M12.500 1h5l1 4 3 1.500 4-1 2.500 4.500-2.500 3v4l2.500 3-2.500 4.500-4-1-3 1.500-1 4h-5l-1-4-3-1.500-4 1L2 20l2.500-3v-4L2 10l2.500-4.500 4 1 3-1.500z" fill="#87929e" /><circle cx="15" cy="15" r="7.500" fill="#f0f4f8" /><circle cx="15" cy="15" r="5.700" fill="#0f63b8" /></AppIcon>
        <AppIcon><path d="M7 11L19 1l10 9v16a3 3 0 0 1-3 3H10a3 3 0 0 1-3-3z" fill="#1490df" /><path d="M14 20l15-9v15a3 3 0 0 1-3 3H10z" fill="#50d9ff" /><path d="M19 1l10 9-14 9-8-8z" fill="#0f6cbd" /><rect x="0" y="9" width="14" height="14" rx="2" fill="#0f6cbd" /><circle cx="7" cy="16" r="3.500" fill="none" stroke="#fff" strokeWidth="2" /></AppIcon>
        <AppIcon run={1}><path d="M1 2h9l3 3h16v10H1z" fill="#e6a319" /><path d="M1 7h28v22H1z" fill="#ffcf45" /><path d="M6 21h18v8H6z" fill="#1a7fd0" /><path d="M10 24h10v2H10z" fill="#0c4f8b" /></AppIcon>
        <AppIcon run={1}><circle cx="15" cy="15" r="14" fill="#fbc116" /><path d="M15 15L2.900 8A14 14 0 0 1 27.100 8H15z" fill="#e33b2e" /><path d="M2.900 8A14 14 0 0 0 14 29l6.500-11L9 18z" fill="#26a148" /><circle cx="15" cy="15" r="7" fill="#fff" /><circle cx="15" cy="15" r="5.500" fill="#1a73e8" /></AppIcon>
        <AppIcon><circle cx="15" cy="15" r="14" fill="#1ed760" /><path d="M7 10.500c6-1.500 12-1 17 2M8 15.500c5-1.200 10-.7 14 1.500M9 20c4-1 8-.5 11.500 1.500" stroke="#10231a" strokeWidth="2.400" strokeLinecap="round" fill="none" /></AppIcon>
        <AppIcon><circle cx="16" cy="5.500" r="4.500" fill="#7b83eb" /><circle cx="25" cy="7" r="3.500" fill="#5059c9" /><path d="M9 11h20v10a7 7 0 0 1-7 7c-8 0-13-3-13-9z" fill="#7b83eb" /><rect x="1" y="9" width="14" height="14" rx="2" fill="#4b53bc" /><path d="M4.500 12.500h7M8 12.500V20" stroke="#fff" strokeWidth="2" /><circle cx="22.500" cy="23" r="6.500" fill="#d9c3b5" /><path d="M18 27c0-9 8-9 8 0z" fill="#8b3f3a" /></AppIcon>
        <AppIcon run={1}><path d="M7 1h22v28H7z" fill="#2b7cd3" /><path d="M7 1h22v7H7z" fill="#41a5ee" /><path d="M7 22h22v7H7z" fill="#103f91" /><rect x="1" y="8" width="14" height="14" rx="1.500" fill="#185abd" /><text x="2.500" y="19" fontSize="11" fontWeight="700" fontFamily="Open Sans" fill="#fff">W</text></AppIcon>
        <AppIcon run={1}><circle cx="16" cy="15" r="14" fill="#ed6c47" /><path d="M16 15V1a14 14 0 0 1 14 14z" fill="#ff8f6b" /><path d="M2 15h28a14 14 0 0 1-28 0z" fill="#d35230" /><rect x="1" y="8" width="14" height="14" rx="1.500" fill="#c43e1c" /><text x="4.500" y="19" fontSize="11" fontWeight="700" fontFamily="Open Sans" fill="#fff">P</text></AppIcon>
        <AppIcon run={2}><g transform="scale(1.250)"><path d="M11.500.5a11 11 0 1 0 6 20.500L13.500 17a6 6.200 0 1 1 4.300-5.500l4.500 4.300A11 11 0 0 0 11.500.5z" fill="#8fb52c" /><path d="M15 15h4.500l4.500 5v4h-4.500L13.500 18z" fill="#a6bd2a" /><path d="M10.500 9h4.500l4 4.500-3.500 3.500-5-4.500z" fill="#ee7913" /><path d="M13 12l7 7" stroke="#f3e05a" strokeWidth="1.500" /></g></AppIcon>
      </div>
      <div className="ml-auto flex items-center pr-[25px] text-[14px] tracking-[-0.200px]">
        <svg width="14" height="9" viewBox="0 0 14 9" fill="none" stroke="#fff" strokeWidth="1.700"><path d="M1 8l6-6.500L13 8" /></svg>
        <svg width="22" height="20" viewBox="0 0 22 20" className="ml-[22px]"><path d="M6 16a5 5 0 0 1 0-9.500 6 6 0 0 1 10.500 1A4.500 4.500 0 0 1 17 16z" fill="#8e979d" /><path d="M3 2l17 16" stroke="#fff" strokeWidth="1.500" /></svg>
        <span className="ml-[23px] w-[29px]">POR</span>
        <svg width="20" height="18" viewBox="0 0 20 18" className="ml-[22px]" fill="none" stroke="#fff" strokeWidth="1.700"><path d="M1.500 7c5-5.300 12-5.300 17 0M4.200 10c3.500-3.600 8-3.600 11.600 0M7 13c2-2 4-2 6 0" /><circle cx="10" cy="15.500" r="1.300" fill="#fff" stroke="none" /></svg>
        <svg width="21" height="16" viewBox="0 0 21 16" className="ml-[9px]" fill="none" stroke="#fff" strokeWidth="1.400"><path d="M1 5.500h3.500L9 1.500v13l-4.500-4H1zM13 5.500l5.500 5.500M18.500 5.500L13 11" /></svg>
        <svg width="21" height="14" viewBox="0 0 21 14" className="ml-[9px]" fill="none" stroke="#fff" strokeWidth="1.500"><rect x="1" y="1" width="16" height="11.500" rx="2.500" /><path d="M3.500 3.500h7v6.500h-7z" fill="#fff" /><path d="M19.300 5v4" strokeWidth="2" /></svg>
        <div className="ml-[14px] w-[76px] text-right leading-[20px]"><div>3:54 PM</div><div className="tracking-[0.100px]">5/28/2025</div></div>
        <svg width="18" height="20" viewBox="0 0 18 20" className="ml-[11px]"><path d="M1 15l2-3V7c0-4 3-6 6-6 4 0 6 3 6 6v5l2 3zM6 16h6a3 3 0 0 1-6 0z" fill="#fff" /><path d="M6.500 6h4l-4 5h4M12 2h4l-4 4h4" stroke="#14232b" strokeWidth="1.400" fill="none" /></svg>
      </div>
    </div>
  );
}

export default function App() {
  return (
    <div className="flex h-[1080px] w-[1920px] flex-col overflow-hidden bg-[#efefef] font-['Open_Sans',sans-serif] text-black">
      <div className="flex h-[28px] shrink-0 items-center bg-gradient-to-r from-[#f9eff5] via-[#fceeee] to-[#f5eff8] pl-[2px]">
        <QGIS s={21} />
        <span className="ml-[5px] pt-px text-[14.600px] tracking-[-0.200px]">*Untitled Project — QGIS</span>
        <div className="ml-auto flex items-center pr-[26px]">
          <svg width="12" height="12" className="mr-[46px]"><path d="M0 6.500h12" stroke="#000" strokeWidth="1.300" /></svg>
          <svg width="13" height="13" viewBox="0 0 13 13" className="mr-[46px]" fill="none" stroke="#000" strokeWidth="1.300"><rect x="1" y="3.500" width="8.500" height="8.500" rx="1.500" /><path d="M3.500 1h6a2.500 2.500 0 0 1 2.500 2.500v6" /></svg>
          <svg width="13" height="13" viewBox="0 0 13 13" stroke="#000" strokeWidth="1.300"><path d="M.5.5l12 12M12.500.5l-12 12" /></svg>
        </div>
      </div>
      <div className="flex h-[27px] shrink-0 items-center border-b-2 border-[#d8d8d8] pl-[13px] pt-[2px] text-[14px] tracking-[-0.220px]">
        {menus.map(([m, u, w]) => (
          <div key={m} className={"shrink-0 " + w}>{m.slice(0, u)}<span className="underline underline-offset-2">{m[u]}</span>{m.slice(u + 1)}</div>
        ))}
      </div>
      <div className="shrink-0"><ToolbarOne /><ToolbarTwo /></div>
      <div className="flex h-[832px] shrink-0 border-b border-[#b4b4b4]">
        <Sidebar />
        <div className="w-[9px] shrink-0" />
        <div className="flex grow flex-col bg-white">
          <div className="flex h-[35px] shrink-0 items-center border border-[#b9d5e6] bg-[#e5f4fd] pl-[12px] pr-[27px]">
            <svg width="28" height="26" viewBox="0 0 28 26"><path d="M4 1h20a2.500 2.500 0 0 1 2.500 2.500v11A2.500 2.500 0 0 1 24 17H13l-5 5.500V17H4a2.500 2.500 0 0 1-2.500-2.500v-11A2.500 2.500 0 0 1 4 1z" fill="#fff" stroke="#888" strokeWidth="1.300" /></svg>
            <span className="ml-[12px] pt-[5px] text-[12.500px] tracking-[-0.280px] text-[#1b4fa0]">An update to the Plugin Load Times plugin is available</span>
            <div className="ml-auto flex h-[26px] w-[103px] items-center justify-center whitespace-nowrap rounded-[2px] border border-[#aaa] bg-gradient-to-b from-white to-[#f0f0f0] text-[12.500px] tracking-[-0.250px]">Install Updates...</div>
            <svg width="22" height="22" viewBox="0 0 22 22" className="-mt-[2px] ml-[39px]"><circle cx="11" cy="11" r="10.500" fill="#333839" /><path d="M6.500 6.500l9 9M15.500 6.500l-9 9" stroke="#fff" strokeWidth="3" /></svg>
          </div>
          <Map />
        </div>
      </div>
      <Status />
      <Taskbar />
    </div>
  );
}
